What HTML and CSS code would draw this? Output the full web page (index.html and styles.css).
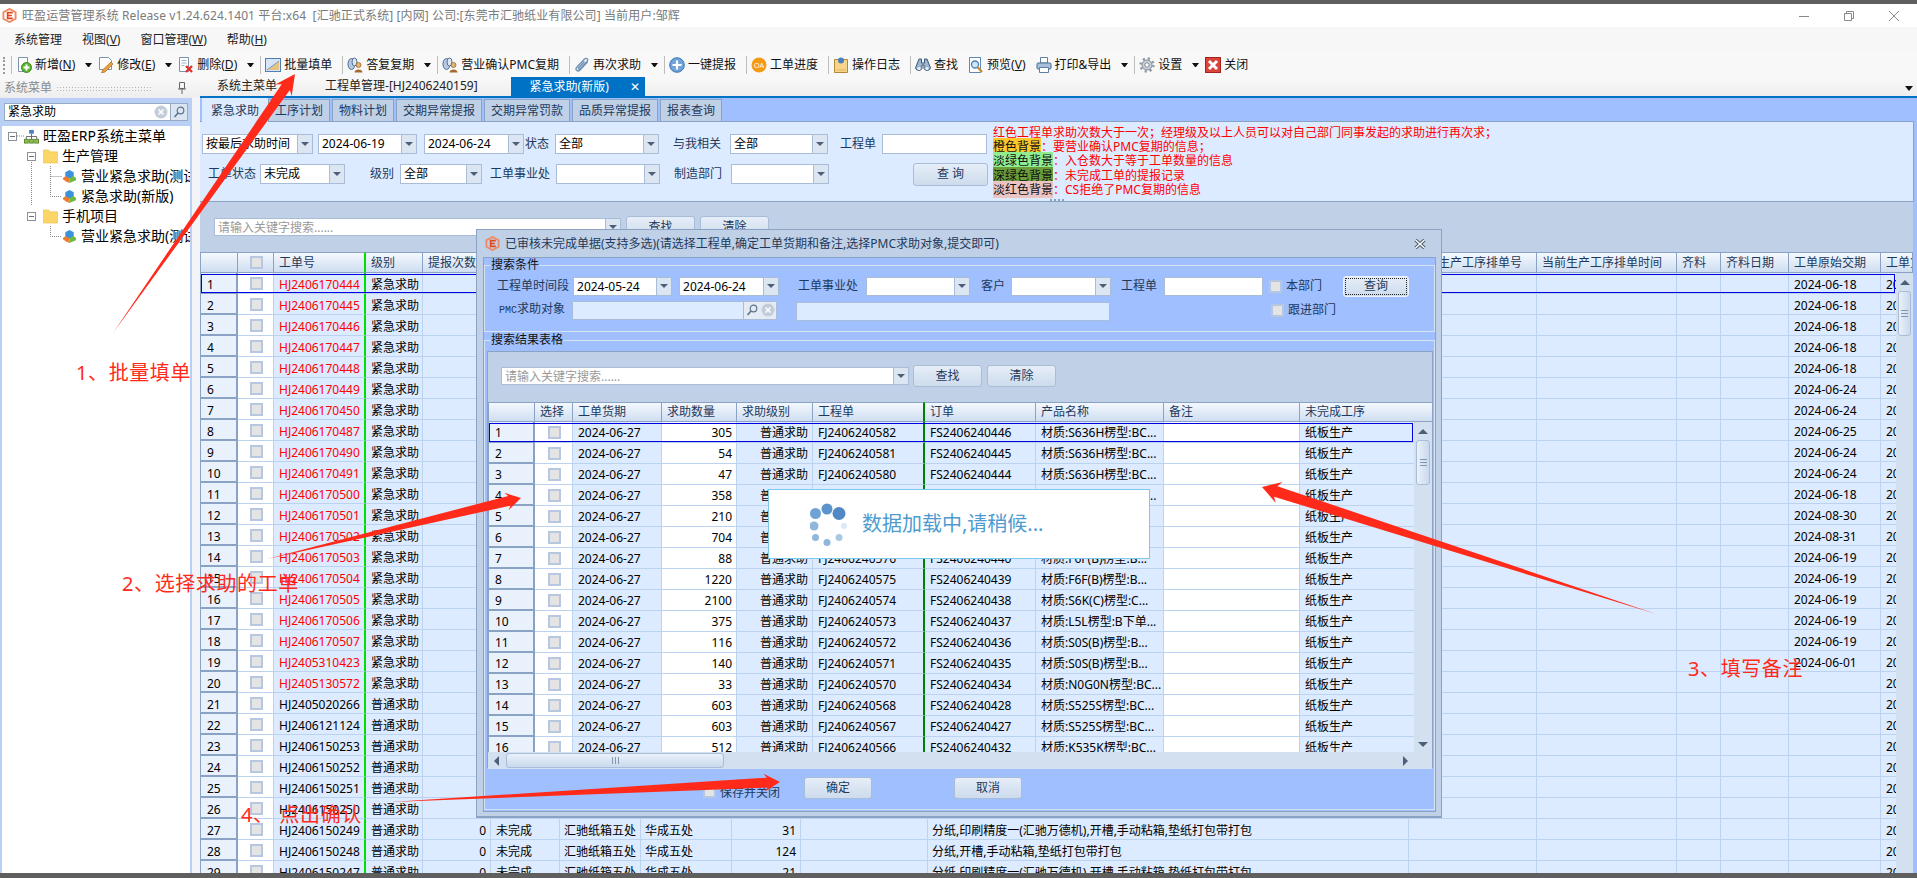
FILE: index.html
```html
<!DOCTYPE html>
<html lang="zh-CN">
<head>
  <meta charset="UTF-8" />
  <title>旺盈运营管理系统</title>
  <link rel="stylesheet" href="styles.css">
</head>
<body>
  <svg class="defs" width="0" height="0">
    <symbol id="i-logo" viewBox="0 0 16 16">
      <path d="M8 1 14.5 4.5V11.5L8 15 1.5 11.5V4.5Z" fill="none" stroke="#f08a63" stroke-width="2"/>
      <path d="M11.5 5H6V11H11.5M6 8H10.5" fill="none" stroke="#e2481c" stroke-width="1.8"/>
    </symbol>
    <symbol id="i-add" viewBox="0 0 16 16">
      <path d="M2.5 .5H11.5V14.5H2.5Z" fill="#fff" stroke="#7d93ad"/>
      <circle cx="10.5" cy="10.5" r="5" fill="#5cb531" stroke="#3d8a1d"/>
      <path d="M10.5 7.5V13.5M7.5 10.5H13.5" stroke="#fff" stroke-width="2"/>
    </symbol>
    <symbol id="i-edit" viewBox="0 0 16 16">
      <path d="M1.5 .5H10.5L13.5 3.5V12.5H1.5Z" fill="#fff" stroke="#7d93ad"/>
      <path d="M13 5 15 7 7 15 3.5 16 5 12.5Z" fill="#e9a23b" stroke="#a86f1e" stroke-width=".7"/>
    </symbol>
    <symbol id="i-del" viewBox="0 0 16 16">
      <path d="M1.5 .5H10.5V14.5H1.5Z" fill="#fff" stroke="#7d93ad"/>
      <path d="M3.5 3.5H8.5M3.5 6H8.5M3.5 8.5H6.5" stroke="#9fb3cc"/>
      <path d="M8 9 14 15M14 9 8 15" stroke="#d9332a" stroke-width="2.4"/>
    </symbol>
    <symbol id="i-batch" viewBox="0 0 16 16">
      <rect x=".5" y="1.5" width="15" height="13" fill="#d5e5f7" stroke="#4f7fb5"/>
      <path d="M2 13 14 4V13Z" fill="#e8c27f"/>
      <path d="M2 13 14 4" stroke="#6f9ac9"/>
    </symbol>
    <symbol id="i-reply" viewBox="0 0 16 16">
      <ellipse cx="4.5" cy="7" rx="3.5" ry="5.5" fill="#b6cbe2" stroke="#4f6f95"/>
      <ellipse cx="7.5" cy="5" rx="2.5" ry="4" fill="#dbe6f2" stroke="#4f6f95"/>
      <circle cx="11.5" cy="8" r="2.5" fill="#e3b36f" stroke="#8a5a1f" stroke-width=".7"/>
      <path d="M7.5 15.5C7.5 11.5 15.5 11.5 15.5 15.5Z" fill="#a56a2b"/>
    </symbol>
    <symbol id="i-clip" viewBox="0 0 16 16">
      <path d="M13.5 5 6 13C3.5 15.5 .5 12.5 3 10L10.5 2C12.5 .3 15 2.5 13 4.5L6 12C5 13 3.8 11.8 4.7 10.8L10.5 4.5" fill="none" stroke="#6d8db3" stroke-width="1.3"/>
    </symbol>
    <symbol id="i-plus" viewBox="0 0 16 16">
      <circle cx="8" cy="8" r="7.3" fill="#6ea3dc" stroke="#3f73ad"/>
      <path d="M8 3.5V12.5M3.5 8H12.5" stroke="#fff" stroke-width="2.2"/>
    </symbol>
    <symbol id="i-oa" viewBox="0 0 16 16">
      <circle cx="8" cy="8" r="7.5" fill="#f59a12"/>
      <text x="8" y="10.5" text-anchor="middle" font-size="7" fill="#fff" font-family="Liberation Sans">OA</text>
    </symbol>
    <symbol id="i-note" viewBox="0 0 16 16">
      <path d="M1.5 2.5H14.5V15.5H1.5Z" fill="#f6d58a" stroke="#b3893b"/>
      <path d="M3 13H13" stroke="#e2b65a"/>
      <circle cx="8" cy="3.5" r="3" fill="#4a7fc0"/>
    </symbol>
    <symbol id="i-find" viewBox="0 0 16 16">
      <path d="M4 2H6.5V6H9.5V2H12L15.5 11A3.5 3.5 0 0 1 9 11.5V8H7V11.5A3.5 3.5 0 0 1 .5 11Z" fill="#9db4ce" stroke="#3f5875"/>
      <circle cx="4" cy="11.5" r="1.6" fill="#e8f0f8"/>
      <circle cx="12" cy="11.5" r="1.6" fill="#e8f0f8"/>
    </symbol>
    <symbol id="i-view" viewBox="0 0 16 16">
      <path d="M1.5 .5H12.5V15.5H1.5Z" fill="#fff" stroke="#5d86b8"/>
      <circle cx="7" cy="7.5" r="3.5" fill="#cfe5f8" stroke="#4f7fb5" stroke-width="1.3"/>
      <path d="M9.5 10 14 15" stroke="#c98a2b" stroke-width="2.2"/>
    </symbol>
    <symbol id="i-print" viewBox="0 0 16 16">
      <path d="M4.5 .5H11.5V6H4.5Z" fill="#fff" stroke="#5f7fa5"/>
      <rect x="1" y="6" width="14" height="6" rx="1" fill="#a9c0db" stroke="#4f6f95"/>
      <path d="M3.5 10.5H12.5V15.5H3.5Z" fill="#fff" stroke="#5f7fa5"/>
    </symbol>
    <symbol id="i-gear" viewBox="0 0 16 16">
      <circle cx="8" cy="8" r="5" fill="#c9d0d8" stroke="#7f8b99"/>
      <circle cx="8" cy="8" r="6.5" fill="none" stroke="#8e99a6" stroke-width="2.4" stroke-dasharray="2.2 2.9"/>
      <circle cx="8" cy="8" r="2.2" fill="#fff" stroke="#7f8b99"/>
    </symbol>
    <symbol id="i-close" viewBox="0 0 16 16">
      <rect x=".5" y=".5" width="15" height="15" fill="#d9433a" stroke="#a5231c"/>
      <path d="M4 4 12 12M12 4 4 12" stroke="#fff" stroke-width="3"/>
    </symbol>
    <symbol id="i-org" viewBox="0 0 16 16">
      <rect x="5.5" y="1" width="5" height="4" fill="#4a7fc0"/>
      <path d="M8 5V8M2.5 11V8H13.5V11M8 8V11" fill="none" stroke="#666"/>
      <rect x=".5" y="11" width="4" height="4" fill="#8cc152" stroke="#5d8a2c"/>
      <rect x="6" y="11" width="4" height="4" fill="#8cc152" stroke="#5d8a2c"/>
      <rect x="11.5" y="11" width="4" height="4" fill="#8cc152" stroke="#5d8a2c"/>
    </symbol>
    <symbol id="i-folder" viewBox="0 0 16 16">
      <path d="M.5 1H6L7.5 3H15.5V15H.5Z" fill="#fbd666" stroke="#e8bd45" stroke-width=".6"/>
    </symbol>
    <symbol id="i-cube" viewBox="0 0 16 16">
      <path d="M8 1 12.5 3.5V8L8 10.5 3.5 8V3.5Z" fill="#3c93dc"/>
      <path d="M4 7.5 8 10V15L4 13 1 11V9.5Z" fill="#ef7a30"/>
      <path d="M8 10 12 7.5 15 9.5V12L8 15Z" fill="#6cbb3c"/>
    </symbol>
    <symbol id="i-search" viewBox="0 0 12 12">
      <circle cx="7.5" cy="4.5" r="3.3" fill="none" stroke="#5f7590" stroke-width="1.2"/>
      <path d="M5 7 1.5 11" stroke="#5f7590" stroke-width="1.6"/>
    </symbol>
    <symbol id="i-clear" viewBox="0 0 14 14">
      <circle cx="7" cy="7" r="6.5" fill="#c3cdd9"/>
      <path d="M4.5 4.5 9.5 9.5M9.5 4.5 4.5 9.5" stroke="#fff" stroke-width="1.6"/>
    </symbol>
  </svg>

  <div class="strip"></div>

  <div class="titlebar">
    <svg class="logo"><use href="#i-logo"/></svg>
    <span class="title-text">旺盈运营管理系统 Release v1.24.624.1401 平台:x64 &nbsp;[汇驰正式系统] [内网] 公司:[东莞市汇驰纸业有限公司] 当前用户:邹辉</span>
    <div class="win-btns">
      <svg width="10" height="10"><path d="M0 5.5H10" stroke="#8a8a8a"/></svg>
      <svg width="10" height="10"><path d="M.5 2.5H7.5V9.5H.5ZM2.5 2.5V.5H9.5V7.5H7.5" fill="none" stroke="#8a8a8a"/></svg>
      <svg width="10" height="10"><path d="M0 0 10 10M10 0 0 10" stroke="#8a8a8a"/></svg>
    </div>
  </div>

  <div class="menubar">
    <span>系统管理</span>
    <span>视图(<u>V</u>)</span>
    <span>窗口管理(<u>W</u>)</span>
    <span>帮助(<u>H</u>)</span>
  </div>

  <div class="toolbar">
    <i class="grip"></i><i class="sep"></i>
    <span class="tool"><svg><use href="#i-add"/></svg><span>新增(<u>N</u>)</span></span><i class="caret"></i>
    <span class="tool"><svg><use href="#i-edit"/></svg><span>修改(<u>E</u>)</span></span><i class="caret"></i>
    <span class="tool"><svg><use href="#i-del"/></svg><span>删除(<u>D</u>)</span></span><i class="caret"></i><i class="sep"></i>
    <span class="tool"><svg><use href="#i-batch"/></svg>批量填单</span><i class="sep"></i>
    <span class="tool"><svg><use href="#i-reply"/></svg>答复复期</span><i class="caret"></i><i class="sep"></i>
    <span class="tool"><svg><use href="#i-reply"/></svg>营业确认PMC复期</span><i class="sep"></i>
    <span class="tool"><svg><use href="#i-clip"/></svg>再次求助</span><i class="caret"></i><i class="sep"></i>
    <span class="tool"><svg><use href="#i-plus"/></svg>一键提报</span><i class="sep"></i>
    <span class="tool"><svg><use href="#i-oa"/></svg>工单进度</span><i class="sep"></i>
    <span class="tool"><svg><use href="#i-note"/></svg>操作日志</span><i class="sep"></i>
    <span class="tool"><svg><use href="#i-find"/></svg>查找</span>
    <span class="tool"><svg><use href="#i-view"/></svg><span>预览(<u>V</u>)</span></span>
    <span class="tool"><svg><use href="#i-print"/></svg>打印&amp;导出</span><i class="caret"></i><i class="sep"></i>
    <span class="tool"><svg><use href="#i-gear"/></svg>设置</span><i class="caret"></i>
    <span class="tool"><svg><use href="#i-close"/></svg>关闭</span>
  </div>

  <div class="workspace">
    <aside class="sidebar">
      <div class="side-head">
        <span>系统菜单</span>
        <i class="side-dots"></i>
        <svg width="8" height="12"><path d="M1.5 .5H6.5V6.5H1.5ZM0 7H8M4 7V12" fill="none" stroke="#666"/></svg>
      </div>
      <div class="side-search">
        <div class="side-box">
          <span class="side-query">紧急求助</span>
          <svg class="icon-14"><use href="#i-clear"/></svg>
          <span class="side-btn"><svg class="icon-12"><use href="#i-search"/></svg></span>
        </div>
      </div>
      <div class="tree">
        <svg class="tree-lines" width="120" height="130"><path d="M12.5 15V10M17 10H24M31.5 30V80M31.5 30H27M31.5 90H27M50.5 40V70.5H62M50.5 50.5H62M50.5 100V110.5H62" fill="none" stroke="#888" stroke-dasharray="1 1"/></svg>
        <div class="node lv0"><i class="expander"></i><svg><use href="#i-org"/></svg>旺盈ERP系统主菜单</div>
        <div class="node lv1"><i class="expander"></i><svg><use href="#i-folder"/></svg>生产管理</div>
        <div class="node lv2"><svg><use href="#i-cube"/></svg>营业紧急求助(测试)</div>
        <div class="node lv2"><svg><use href="#i-cube"/></svg>紧急求助(新版)</div>
        <div class="node lv1"><i class="expander"></i><svg><use href="#i-folder"/></svg>手机项目</div>
        <div class="node lv2"><svg><use href="#i-cube"/></svg>营业紧急求助(测试)</div>
      </div>
    </aside>

    <main class="main">
      <div class="doc-tabs">
        <span class="doc-tab tab-home">系统主菜单</span>
        <span class="doc-tab tab-order">工程单管理-[HJ2406240159]</span>
        <span class="doc-tab active">紧急求助(新版)<b>✕</b></span>
        <i class="tabs-more"></i>
      </div>

      <div class="sub-tabs">
        <span class="sub-tab active">紧急求助</span>
        <span class="sub-tab">工序计划</span>
        <span class="sub-tab">物料计划</span>
        <span class="sub-tab">交期异常提报</span>
        <span class="sub-tab">交期异常罚款</span>
        <span class="sub-tab">品质异常提报</span>
        <span class="sub-tab">报表查询</span>
      </div>

      <section class="filter">
        <div class="filter-form">
          <div class="form-row">
            <div class="combo w-111"><span>按最后求助时间</span><i></i></div>
            <div class="combo w-99 ml-5"><span>2024-06-19</span><i></i></div>
            <div class="combo w-100 ml-7"><span>2024-06-24</span><i></i></div>
            <label class="ml-1">状态</label>
            <div class="combo w-104 ml-6"><span>全部</span><i></i></div>
            <label class="ml-14">与我相关</label>
            <div class="combo w-98 ml-9"><span>全部</span><i></i></div>
            <label class="ml-12">工程单</label>
            <div class="input w-105 ml-6"></div>
          </div>
          <div class="form-row">
            <label class="ml-6">工单状态</label>
            <div class="combo w-85 ml-4"><span>未完成</span><i></i></div>
            <label class="ml-25">级别</label>
            <div class="combo w-82 ml-6"><span>全部</span><i></i></div>
            <label class="ml-8">工单事业处</label>
            <div class="combo w-104 ml-6"><span></span><i></i></div>
            <label class="ml-14">制造部门</label>
            <div class="combo w-98 ml-9"><span></span><i></i></div>
            <button class="btn btn-query ml-84">查 询</button>
          </div>
        </div>
        <div class="legend">
          <div>红色工程单求助次数大于一次；经理级及以上人员可以对自己部门同事发起的求助进行再次求；</div>
          <div><b class="bg-orange">橙色背景</b>：要营业确认PMC复期的信息；</div>
          <div><b class="bg-lime">淡绿色背景</b>：入仓数大于等于工单数量的信息</div>
          <div><b class="bg-green">深绿色背景</b>：未完成工单的提报记录</div>
          <div><b class="bg-pink">淡红色背景</b>：CS拒绝了PMC复期的信息</div>
          <i class="legend-more"></i>
        </div>
      </section>

      <div class="band">
        <div class="combo w-407 placeholder"><span>请输入关键字搜索......</span><i></i></div>
        <button class="btn w-69 ml-5">查找</button>
        <button class="btn w-69 ml-5">清除</button>
      </div>

      <div class="grid main-grid">
        <div class="grid-head" id="mainHead"></div>
        <div class="grid-body">
          <div class="rows" id="mainRows"></div>
          <div class="vscroll">
            <i class="arrow-up"></i>
            <div class="thumb"><i></i></div>
          </div>
        </div>
      </div>
    </main>
  </div>

  <div class="strip strip-bottom"></div>

  <div class="dialog">
    <div class="dialog-title">
      <svg class="logo"><use href="#i-logo"/></svg>
      <span>已审核未完成单据(支持多选)(请选择工程单,确定工单货期和备注,选择PMC求助对象,提交即可)</span>
      <svg class="dialog-close" width="12" height="10"><path d="M1.5 1 10.5 9M10.5 1 1.5 9" stroke="#4d5a6a" stroke-width="3.4"/><path d="M1.5 1 10.5 9M10.5 1 1.5 9" stroke="#fff" stroke-width="1.4"/></svg>
    </div>
    <div class="dialog-body">
      <fieldset class="group group-search">
        <legend>搜索条件</legend>
        <div class="dlg-row">
          <label class="ml-12">工程单时间段</label>
          <div class="combo w-99 ml-4"><span>2024-05-24</span><i></i></div>
          <div class="combo w-100 ml-7"><span>2024-06-24</span><i></i></div>
          <label class="ml-19">工单事业处</label>
          <div class="combo w-104 ml-8"><span></span><i></i></div>
          <label class="ml-11">客户</label>
          <div class="combo w-100 ml-6"><span></span><i></i></div>
          <label class="ml-10">工程单</label>
          <div class="input w-99 ml-7"></div>
          <i class="check ml-6"></i>
          <label class="ml-4">本部门</label>
          <button class="btn btn-focus ml-21">查询</button>
        </div>
        <div class="dlg-row row-pmc">
          <label class="ml-14 pmc-label"><em>PMC</em>求助对象</label>
          <div class="lookup ml-7">
            <span></span>
            <b><svg class="icon-12"><use href="#i-search"/></svg></b>
            <b class="lookup-clear"><svg class="icon-14"><use href="#i-clear"/></svg></b>
          </div>
          <div class="input input-off ml-19"></div>
          <i class="check ml-161"></i>
          <label class="ml-4">跟进部门</label>
        </div>
      </fieldset>

      <fieldset class="group group-result">
        <legend>搜索结果表格</legend>
        <div class="result-panel">
          <div class="result-search">
            <div class="combo w-408 placeholder"><span>请输入关键字搜索......</span><i></i></div>
            <button class="btn w-69 ml-4">查找</button>
            <button class="btn w-69 ml-5">清除</button>
          </div>
          <div class="grid dlg-grid">
            <div class="grid-head" id="dlgHead"></div>
            <div class="grid-body">
              <div class="rows" id="dlgRows"></div>
              <div class="vscroll">
                <i class="arrow-up"></i>
                <div class="thumb"><i></i></div>
                <i class="arrow-down"></i>
              </div>
            </div>
            <div class="hscroll">
              <i class="arrow-left"></i>
              <div class="hthumb"><i></i></div>
              <i class="arrow-right"></i>
            </div>
          </div>
        </div>
        <div class="dlg-actions">
          <i class="check ml-218 drop"></i>
          <label class="ml-4 drop">保存并关闭</label>
          <button class="btn w-68 ml-24">确定</button>
          <button class="btn w-68 ml-82">取消</button>
        </div>
      </fieldset>
    </div>

    <div class="loading">
      <svg width="40" height="44" viewBox="0 0 40 44">
        <circle cx="17" cy="7" r="5.5" fill="#5b93cc"/>
        <circle cx="29" cy="11.5" r="6.5" fill="#5087c4"/>
        <circle cx="34" cy="24" r="3" fill="#dbe8f5"/>
        <circle cx="29" cy="35.5" r="3.5" fill="#a9c8e6"/>
        <circle cx="17" cy="40.5" r="3.5" fill="#8fb7de"/>
        <circle cx="5.5" cy="35.5" r="3.5" fill="#8fb7de"/>
        <circle cx="4" cy="24" r="4.5" fill="#8fb7de"/>
        <circle cx="5.5" cy="11.5" r="5.5" fill="#6fa3d6"/>
      </svg>
      <span>数据加载中,请稍候...</span>
    </div>
  </div>

  <svg class="marks" width="1917" height="878" id="marks"></svg>
  <span class="mark-text mark-1">1、批量填单</span>
  <span class="mark-text mark-2">2、选择求助的工单</span>
  <span class="mark-text mark-3">3、填写备注</span>
  <span class="mark-text mark-4">4、 点出确认</span>

  <script>
    // main grid
    var mainHead = [
      ['', 'h-num'], ['', 'h-chk'], ['工单号', 'h-green'], ['级别'], ['提报次数'], ['状态'], ['工单事业处'],
      ['制造部门'], ['数量'], ['备注'], ['工艺流程'], ['当前生产工序排单号'], ['当前生产工序排单时间'],
      ['齐料'], ['齐料日期'], ['工单原始交期'], ['工单货期']
    ];
    var red = ['HJ2406170444','HJ2406170445','HJ2406170446','HJ2406170447','HJ2406170448','HJ2406170449','HJ2406170450',
      'HJ2406170487','HJ2406170490','HJ2406170491','HJ2406170500','HJ2406170501','HJ2406170502','HJ2406170503',
      'HJ2406170504','HJ2406170505','HJ2406170506','HJ2406170507','HJ2405310423','HJ2405130572'];
    var black = ['HJ2405020266','HJ2406121124','HJ2406150253','HJ2406150252','HJ2406150251','HJ2406150250',
      'HJ2406150249','HJ2406150248','HJ2406150247'];
    var dates = ['06-18','06-18','06-18','06-18','06-18','06-24','06-24','06-25','06-24','06-24','06-18','08-30','08-31',
      '06-19','06-19','06-19','06-19','06-19','06-01'];
    var tail = {
      27: ['31', '分纸,印刷精度一(汇驰万德机),开槽,手动粘箱,垫纸打包带打包'],
      28: ['124', '分纸,开槽,手动粘箱,垫纸打包带打包'],
      29: ['21', '分纸,印刷精度一(汇驰万德机),开槽,手动粘箱,垫纸打包带打包']
    };

    // dialog grid
    var dlgHead = [
      ['', 'h-num'], ['选择'], ['工单货期'], ['求助数量'], ['求助级别'], ['工程单', 'h-dkgreen'], ['订单'],
      ['产品名称'], ['备注'], ['未完成工序']
    ];
    var S636 = '材质:S636H楞型:BC...', F6F = '材质:F6F(B)楞型:B...', S0S = '材质:S0S(B)楞型:B...', S525 = '材质:S525S楞型:BC...';
    var dlgData = [
      [305,582,446,S636],[54,581,445,S636],[47,580,444,S636],[358,579,443,S636],[210,578,442,F6F],[704,577,441,F6F],
      [88,576,440,F6F],[1220,575,439,F6F],[2100,574,438,'材质:S6K(C)楞型:C...'],[375,573,437,'材质:L5L楞型:B下单...'],
      [116,572,436,S0S],[140,571,435,S0S],[33,570,434,'材质:N0G0N楞型:BC...'],[603,568,428,S525],[603,567,427,S525],
      [512,566,432,'材质:K535K楞型:BC...']
    ];

    function cell(text, cls) {
      var d = document.createElement('div');
      d.className = 'c ' + (cls || '');
      d.textContent = text;
      return d;
    }

    function checkCell() {
      var d = cell('', 'c-chk');
      d.innerHTML = '<i class="check"></i>';
      return d;
    }

    function fillHead(id, cols) {
      var head = document.getElementById(id);
      cols.forEach(function (col) {
        var d = cell(col[0], 'c-head ' + (col[1] || ''));
        if (col[1] === 'h-chk') d.innerHTML = '<i class="check"></i>';
        head.appendChild(d);
      });
    }

    function addRow(box, cells, selected) {
      var row = document.createElement('div');
      row.className = 'row' + (selected ? ' selected' : '');
      cells.forEach(function (c) { row.appendChild(c); });
      box.appendChild(row);
    }

    fillHead('mainHead', mainHead);
    fillHead('dlgHead', dlgHead);

    var mainRows = document.getElementById('mainRows');
    red.concat(black).forEach(function (no, i) {
      var n = i + 1;
      var t = tail[n];
      addRow(mainRows, [
        cell(n, 'c-num'),
        checkCell(),
        cell(no, (n <= 20 ? 'red ' : '') + 'c-green'),
        cell(n <= 20 ? '紧急求助' : '普通求助'),
        cell(t ? '0' : '', 'r'),
        cell(t ? '未完成' : ''),
        cell(t ? '汇驰纸箱五处' : '', 'tight'),
        cell(t ? '华成五处' : '', 'tight'),
        cell(t ? t[0] : '', 'r'),
        cell(''),
        cell(t ? t[1] : '', 'tight'),
        cell(''), cell(''), cell(''), cell(''),
        cell(dates[i] ? '2024-' + dates[i] : ''),
        cell('2024-06-27')
      ], i === 0);
    });

    var dlgRows = document.getElementById('dlgRows');
    dlgData.forEach(function (d, i) {
      addRow(dlgRows, [
        cell(i + 1, 'c-num'),
        checkCell(),
        cell('2024-06-27'),
        cell(d[0], 'r c-white'),
        cell('普通求助', 'r'),
        cell('FJ2406240' + d[1], 'c-dkgreen'),
        cell('FS2406240' + d[2]),
        cell(d[3]),
        cell('', 'c-white'),
        cell('纸板生产')
      ], i === 0);
    });

    // red arrows drawn on top of the screenshot
    function arrow(x1, y1, x2, y2, headLen, headHalf, shaft) {
      var len = Math.hypot(x2 - x1, y2 - y1);
      var ux = (x2 - x1) / len, uy = (y2 - y1) / len;
      var px = -uy, py = ux;
      var nx = x2 - ux * headLen * 0.8, ny = y2 - uy * headLen * 0.8;
      var bx = x2 - ux * headLen, by = y2 - uy * headLen;
      var pts = [
        [x1, y1],
        [nx + px * shaft, ny + py * shaft],
        [bx + px * headHalf, by + py * headHalf],
        [x2, y2],
        [bx - px * headHalf, by - py * headHalf],
        [nx - px * shaft, ny - py * shaft]
      ];
      return '<polygon fill="#ff2a1a" points="' + pts.map(function (p) { return p.join(','); }).join(' ') + '"/>';
    }

    document.getElementById('marks').innerHTML =
      arrow(113, 333, 295, 74, 20, 10, 5) +
      arrow(267, 559, 521, 498, 15, 9, 5) +
      arrow(1656, 614, 1262, 487, 18, 11, 5.5) +
      arrow(391, 802, 780, 782, 16, 9, 5);
  </script>
</body>
</html>
```

FILE: styles.css
```css
:root {
  --blue: #9fbfff;
  --panel: #dcebff;
  --band: #c0d1e7;
  --edge: #8aa3c4;
  --line: #bcd3f0;
  --navy: #1e395b;
}

* {
  box-sizing: border-box;
}

body {
  margin: 0;
  width: 1917px;
  height: 878px;
  overflow: hidden;
  position: relative;
  display: flex;
  flex-direction: column;
  background: #fff;
  color: #000;
  font: 12px/16px "Noto Sans", "Noto Sans CJK SC", sans-serif;
}

i {
  display: block;
  font-style: normal;
}

label {
  color: var(--navy);
  white-space: nowrap;
}

.defs {
  position: absolute;
}

.strip {
  height: 4px;
  flex: none;
  background: #5f5f5f;
}

.strip-bottom {
  height: 5px;
}

/* title + menu */
.titlebar {
  height: 23px;
  flex: none;
  display: flex;
  align-items: center;
  padding-left: 2px;
  color: #7a7a7a;
}

.logo {
  width: 15px;
  height: 15px;
  flex: none;
}

.title-text {
  margin-left: 5px;
  white-space: pre;
  letter-spacing: .1px;
}

.win-btns {
  margin-left: auto;
  margin-right: 18px;
  display: flex;
  gap: 35px;
}

.menubar {
  height: 25px;
  flex: none;
  display: flex;
  align-items: center;
  gap: 20px;
  padding-left: 14px;
  background: #f7f7f7;
  color: #222;
}

.toolbar {
  height: 26px;
  flex: none;
  display: flex;
  align-items: center;
  background: #f8f8f8;
  color: #111;
  white-space: nowrap;
}

.grip {
  width: 2px;
  height: 17px;
  margin: 0 6px 0 3px;
  border-left: 2px dotted #9a9a9a;
}

.sep {
  width: 1px;
  height: 18px;
  margin-right: 4px;
  background: #bdbdbd;
}

.tool {
  display: flex;
  align-items: center;
  margin-right: 10px;
}

.tool svg {
  width: 16px;
  height: 16px;
  margin-right: 3px;
}

.caret {
  width: 7px;
  margin-right: 6px;
  border: solid transparent;
  border-width: 4px 3.5px 0;
  border-top-color: #111;
}

/* layout */
.workspace {
  flex: 1;
  min-height: 0;
  display: flex;
}

.sidebar {
  width: 200px;
  flex: none;
  display: flex;
  flex-direction: column;
  background: #f2f4f8;
}

.side-head {
  height: 20px;
  flex: none;
  display: flex;
  align-items: center;
  padding-left: 4px;
  color: #8a8a8a;
  background: linear-gradient(#f8f8f8, #eee);
}

.side-dots {
  width: 97px;
  height: 5px;
  margin: 0 25px 0 4px;
  background: radial-gradient(circle, #b5b5b5 .6px, transparent 1px) 0 0 / 3px 3px;
}

.side-search {
  width: 192px;
  height: 28px;
  flex: none;
  padding: 5px 4px;
  background: #b9cff5;
}

.side-box {
  height: 18px;
  display: flex;
  align-items: center;
  background: #fff;
  border: 1px solid #98abc4;
}

.side-query {
  flex: 1;
  padding-left: 3px;
}

.side-btn {
  width: 17px;
  height: 16px;
  margin-left: 2px;
  display: flex;
  align-items: center;
  justify-content: center;
  background: #dce6f3;
  border-left: 1px solid #98abc4;
}

.icon-12 {
  width: 12px;
  height: 12px;
}

.icon-14 {
  width: 14px;
  height: 14px;
}

.tree {
  flex: 1;
  width: 192px;
  position: relative;
  overflow: hidden;
  background: #fff;
  border-left: 2px solid #b9cff5;
  border-right: 2px solid #b9cff5;
  font-size: 14px;
}

.tree-lines {
  position: absolute;
  left: -2px;
  top: 0;
}

.node {
  height: 20px;
  position: relative;
  display: flex;
  align-items: center;
  white-space: nowrap;
}

.node svg {
  width: 15px;
  height: 15px;
  flex: none;
  margin-right: 4px;
}

.lv0 {
  padding-left: 6px;
}

.lv1 {
  padding-left: 25px;
}

.lv2 {
  padding-left: 60px;
}

.expander {
  width: 9px;
  height: 9px;
  flex: none;
  margin-right: 7px;
  border: 1px solid #8b9099;
  background: linear-gradient(#6a7078, #6a7078) center / 5px 1px no-repeat #fff;
}

.main {
  flex: 1;
  min-width: 0;
  display: flex;
  flex-direction: column;
  background: var(--blue);
  padding-right: 3px;
  position: relative;
}

.doc-tabs {
  height: 20px;
  flex: none;
  margin-right: -3px;
  display: flex;
  align-items: flex-end;
  color: #222;
  background: linear-gradient(#f8f8f8, #eee);
  border-bottom: 2px solid #0072c6;
  position: relative;
}

.doc-tab {
  height: 18px;
  white-space: nowrap;
}

.tab-home {
  margin-left: 17px;
}

.tab-order {
  margin-left: 48px;
}

.doc-tab.active {
  width: 134px;
  height: 21px;
  margin: 0 0 -2px 33px;
  padding: 2px 0 0 19px;
  display: flex;
  justify-content: space-between;
  color: #fff;
  background: #0072c6;
}

.doc-tab.active b {
  font-weight: normal;
  margin-right: 5px;
}

.tabs-more {
  position: absolute;
  right: 4px;
  bottom: 5px;
  border: solid transparent;
  border-width: 5px 4px 0;
  border-top-color: #111;
}

.sub-tabs {
  height: 23px;
  flex: none;
  display: flex;
  align-items: flex-end;
  gap: 2px;
  padding-left: 2px;
  color: var(--navy);
}

.sub-tab {
  height: 22px;
  padding: 3px 6px 0;
  white-space: nowrap;
  background: var(--band);
  border: 1px solid var(--edge);
  border-bottom: 0;
}

.sub-tab.active {
  height: 24px;
  margin: 0 -2px -1px 0;
  padding: 4px 8px 0;
  background: var(--panel);
  border-color: var(--panel);
  position: relative;
}

/* filter panel */
.filter {
  height: 81px;
  flex: none;
  display: flex;
  background: var(--panel);
  border: 1px solid var(--edge);
  border-width: 1px 1px 1px 0;
}

.filter-form {
  width: 793px;
  flex: none;
  padding: 12px 0 0 2px;
}

.form-row {
  display: flex;
  align-items: center;
  height: 20px;
  margin-bottom: 10px;
}

.legend {
  padding-top: 4px;
  color: #f00;
  line-height: 14.2px;
  white-space: nowrap;
  position: relative;
}

.legend b {
  font-weight: normal;
  color: #111;
}

.bg-orange {
  background: #ffc72c;
}

.bg-lime {
  background: #90ee90;
}

.bg-green {
  background: #6b9e3a;
}

.bg-pink {
  background: #ecc4c4;
}

.legend-more {
  width: 14px;
  margin: 2px 0 0 57px;
  border-top: 2px dotted #8aa3c4;
}

/* controls */
.combo,
.input {
  height: 20px;
  flex: none;
  display: flex;
  background: #fff;
  border: 1px solid #a9bdd8;
}

.combo span {
  flex: 1;
  min-width: 0;
  padding-left: 3px;
  line-height: 18px;
  white-space: nowrap;
  overflow: hidden;
}

.combo i {
  width: 15px;
  flex: none;
  border-left: 1px solid #a9bdd8;
  background: #dce6f3;
  position: relative;
}

.combo i::after {
  content: "";
  position: absolute;
  left: 3px;
  top: 7px;
  border: solid transparent;
  border-width: 4px 4px 0;
  border-top-color: #4d5f78;
}

.placeholder span {
  color: #999;
}

.input-off {
  width: 314px;
  height: 19px;
  background: var(--panel);
  margin-top: 2px;
}

.lookup {
  width: 205px;
  height: 19px;
  flex: none;
  display: flex;
  background: var(--panel);
  border: 1px solid #a9bdd8;
}

.lookup span {
  flex: 1;
  border-right: 1px solid #a9bdd8;
}

.lookup b {
  width: 15px;
  display: flex;
  align-items: center;
  justify-content: center;
  background: #e4ebf4;
}

.lookup .lookup-clear {
  width: 17px;
}

.btn {
  height: 22px;
  padding: 0;
  flex: none;
  font: inherit;
  color: var(--navy);
  background: linear-gradient(#e6eef8, #cddbec);
  border: 1px solid #a9bdd8;
  border-radius: 3px;
}

.btn-query {
  width: 75px;
  height: 23px;
}

.btn-focus {
  width: 66px;
  height: 21px;
  outline: 1px dotted #222;
  outline-offset: -3px;
  border-color: #eaf1fb;
}

.check {
  width: 13px;
  height: 13px;
  flex: none;
  background: #e4e4e4;
  border: 2px solid #b7c7e0;
}

/* gray band above the main grid */
.band {
  height: 50px;
  flex: none;
  display: flex;
  padding: 14px 0 0 14px;
  background: var(--band);
  margin-right: 1px;
}

.band .combo {
  height: 18px;
  margin-top: 2px;
}

.band .combo i::after {
  top: 6px;
}

/* grids */
.grid {
  display: flex;
  flex-direction: column;
  min-height: 0;
}

.main-grid {
  flex: 1;
  margin-right: 1px;
  --cols: 38px 36px 92px 57px 68px 69px 81px 91px 69px 127px 481px 128px 140px 44px 68px 92px 32px;
  background: var(--panel);
}

.dlg-grid {
  --cols: 47px 38px 89px 75px 76px 112px 111px 128px 136px 133px;
  background: var(--panel);
}

.grid-head {
  height: 21px;
  flex: none;
  display: grid;
  grid-template-columns: var(--cols);
  overflow: hidden;
}

.dlg-grid .grid-head {
  height: 20px;
}

.grid-body {
  flex: 1;
  min-height: 0;
  display: flex;
}

.dlg-grid .grid-body {
  flex: none;
  height: 330px;
}

.rows {
  flex: 1;
  min-width: 0;
  overflow: hidden;
}

.row {
  height: 21px;
  display: grid;
  grid-template-columns: var(--cols);
  overflow: hidden;
  position: relative;
}

.row.selected {
  outline: 1px solid #0000e0;
  outline-offset: -2px;
  z-index: 1;
}

.c {
  padding: 0 5px;
  overflow: hidden;
  white-space: nowrap;
  line-height: 21px;
  background: var(--panel);
  border-right: 1px solid var(--line);
  border-bottom: 1px solid var(--line);
}

.main-grid .c {
  line-height: 23px;
}

.c.c-head {
  line-height: 20px;
  color: var(--navy);
  background: linear-gradient(#f4f8fe, #cfdef1);
  border-right: 1px solid var(--edge);
  border-top: 1px solid var(--edge);
  border-bottom: 1px solid var(--edge);
}

.dlg-grid .c.c-head {
  line-height: 18px;
}

.h-chk,
.c-chk {
  display: flex;
  justify-content: center;
}

.c.h-chk {
  align-items: center;
  padding: 0 0 0 2px;
}

.c.c-chk {
  padding: 4px 0 0 2px;
  background: #fff;
}

.c.c-num {
  padding-left: 6px;
  background: #e8f1fc;
  border-right: 2px solid var(--edge);
  border-bottom: 2px solid var(--edge);
  border-left: 1px solid var(--edge);
}

.c.h-num {
  border-left: 1px solid var(--edge);
}

.c.h-green,
.c.c-green {
  border-right: 2px solid #00e000;
}

.c.h-dkgreen,
.c.c-dkgreen {
  border-right: 2px solid #008000;
}

.red {
  color: #f00;
}

.c.r {
  text-align: right;
  padding-right: 4px;
}

.c.tight {
  padding-left: 4px;
}

.c.c-white {
  background: #fff;
}

.vscroll {
  width: 17px;
  flex: none;
  overflow: hidden;
  background: #d3e0f0;
  position: relative;
  padding: 18px 2px 0;
}

.dlg-grid .vscroll {
  width: 18px;
}

.arrow-up,
.arrow-down,
.arrow-left,
.arrow-right {
  position: absolute;
  border: solid transparent;
}

.arrow-up {
  left: 4px;
  top: 7px;
  border-width: 0 5px 5px;
  border-bottom-color: #4d5f78;
}

.arrow-down {
  left: 4px;
  bottom: 5px;
  border-width: 5px 5px 0;
  border-top-color: #4d5f78;
}

.thumb {
  height: 45px;
  display: flex;
  align-items: center;
  justify-content: center;
  background: linear-gradient(90deg, #eaf1fa, #c9d9ec);
  border: 1px solid #a9bdd8;
  border-radius: 3px;
}

.thumb i {
  width: 7px;
  height: 7px;
  border-top: 1px solid #8296b0;
  border-bottom: 1px solid #8296b0;
  background: linear-gradient(#8296b0, #8296b0) center / 7px 1px no-repeat;
}

.hscroll {
  height: 17px;
  flex: none;
  position: relative;
  padding: 1px 0 0 18px;
  background: #d3e0f0;
}

.hthumb {
  width: 218px;
  height: 15px;
  display: flex;
  align-items: center;
  justify-content: center;
  background: linear-gradient(#eaf1fa, #c9d9ec);
  border: 1px solid #a9bdd8;
  border-radius: 3px;
}

.hthumb i {
  width: 7px;
  height: 7px;
  border-left: 1px solid #8296b0;
  border-right: 1px solid #8296b0;
  background: linear-gradient(#8296b0, #8296b0) center / 1px 7px no-repeat;
}

.arrow-left {
  left: 6px;
  top: 4px;
  border-width: 5px 5px 5px 0;
  border-right-color: #4d5f78;
}

.arrow-right {
  right: 24px;
  top: 4px;
  border-width: 5px 0 5px 5px;
  border-left-color: #4d5f78;
}

/* dialog window */
.dialog {
  position: absolute;
  left: 476px;
  top: 229px;
  width: 966px;
  height: 589px;
  z-index: 5;
  background: var(--band);
  border: 1px solid var(--edge);
  border-bottom-width: 2px;
}

.dialog-title {
  height: 27px;
  display: flex;
  align-items: center;
  padding-left: 8px;
  color: var(--navy);
}

.dialog-title span {
  margin-left: 5px;
}

.dialog-close {
  margin-left: auto;
  margin-right: 15px;
}

.dialog-body {
  width: 953px;
  height: 555px;
  margin-left: 6px;
  background: var(--blue);
  border: 1px solid var(--edge);
}

.group {
  margin: 0;
  padding: 0;
  min-width: 0;
  border: 1px solid #d6e3f7;
}

.group legend {
  margin-left: 6px;
  padding: 0;
  height: 14px;
  line-height: 14px;
  color: #111;
}

.group-search {
  height: 74px;
  padding-top: 4px;
}

.group-result {
  height: 477px;
  margin-top: 1px;
  padding-top: 4px;
}

.dlg-row {
  display: flex;
  align-items: center;
  height: 20px;
}

.dlg-row .combo,
.dlg-row .input {
  height: 19px;
}

.dlg-row .combo i::after {
  top: 6px;
}

.row-pmc {
  margin-top: 4px;
}

.pmc-label em {
  font: 10px/16px "Liberation Mono", monospace;
}

.result-panel {
  width: 946px;
  height: 417px;
  margin-left: 2px;
  background: var(--band);
  border: 1px solid var(--edge);
}

.result-search {
  height: 22px;
  margin: 13px 0 15px 13px;
  display: flex;
  align-items: center;
}

.result-search .combo {
  height: 18px;
}

.result-search .combo i::after {
  top: 6px;
}

.dlg-actions {
  display: flex;
  align-items: flex-start;
  margin-top: 9px;
}

.drop {
  margin-top: 8px;
}

.loading {
  position: absolute;
  left: 291px;
  top: 259px;
  width: 382px;
  height: 70px;
  display: flex;
  align-items: center;
  padding-left: 41px;
  gap: 12px;
  color: #4f9bd0;
  font-size: 20px;
  background: #fff;
  border: 1px solid #7cc8e8;
}

/* red marks */
.marks {
  position: absolute;
  left: 0;
  top: 0;
  z-index: 10;
  pointer-events: none;
}

.mark-text {
  position: absolute;
  z-index: 11;
  color: #ff2a1a;
  font-size: 20px;
  line-height: 26px;
  letter-spacing: .6px;
  white-space: nowrap;
}

.mark-1 {
  left: 76px;
  top: 360px;
}

.mark-2 {
  left: 122px;
  top: 571px;
}

.mark-3 {
  left: 1688px;
  top: 656px;
}

.mark-4 {
  left: 241px;
  top: 802px;
}

/* sizes */
.w-68 { width: 68px; }
.w-69 { width: 69px; }
.w-82 { width: 82px; }
.w-85 { width: 85px; }
.w-98 { width: 98px; }
.w-99 { width: 99px; }
.w-100 { width: 100px; }
.w-104 { width: 104px; }
.w-105 { width: 105px; }
.w-111 { width: 111px; }
.w-407 { width: 407px; }
.w-408 { width: 408px; }

.ml-1 { margin-left: 1px; }
.ml-4 { margin-left: 4px; }
.ml-5 { margin-left: 5px; }
.ml-6 { margin-left: 6px; }
.ml-7 { margin-left: 7px; }
.ml-8 { margin-left: 8px; }
.ml-9 { margin-left: 9px; }
.ml-10 { margin-left: 10px; }
.ml-11 { margin-left: 11px; }
.ml-12 { margin-left: 12px; }
.ml-14 { margin-left: 14px; }
.ml-19 { margin-left: 19px; }
.ml-21 { margin-left: 21px; }
.ml-24 { margin-left: 24px; }
.ml-25 { margin-left: 25px; }
.ml-82 { margin-left: 82px; }
.ml-84 { margin-left: 84px; }
.ml-161 { margin-left: 161px; }
.ml-218 { margin-left: 218px; }
```
